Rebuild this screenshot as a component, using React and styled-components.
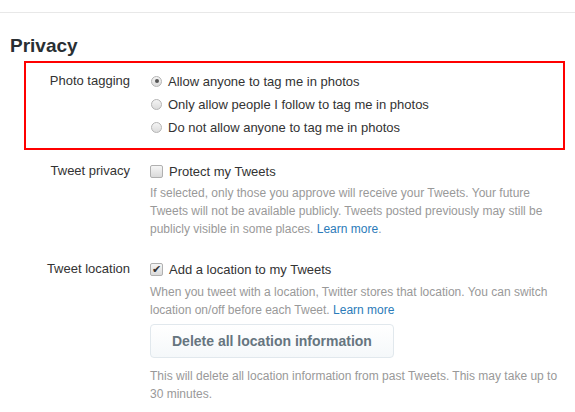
import React from "react";
import styled, { createGlobalStyle } from "styled-components";

const GlobalStyle = createGlobalStyle`
  html, body {
    margin: 0;
    padding: 0;
    background: #fff;
  }
  body {
    font-family: "Liberation Sans", Arial, sans-serif;
    font-size: 13px;
    color: #333;
  }
`;

const Page = styled.div`
  width: 575px;
  padding-top: 12px;
`;

const Rule = styled.div`
  height: 1px;
  background: #e8e8e8;
`;

const Heading = styled.h2`
  margin: 21px 0 0 10px;
  font-size: 19px;
  line-height: 24px;
  font-weight: bold;
  color: #292f33;
`;

const Highlight = styled.div`
  margin: 3px 10px 0 24px;
  border: 2px solid #f00;
  padding: 8px 0 11px;
`;

const Row = styled.div`
  display: grid;
  grid-template-columns: ${(p) => p.$labelWidth}px 1fr;
  column-gap: 20px;
  margin-top: ${(p) => p.$top || 0}px;
`;

const Label = styled.div`
  text-align: right;
  line-height: 18px;
  color: #333;
  padding-top: ${(p) => (p.$radio ? 1 : 0)}px;
`;

const Controls = styled.div`
  display: flex;
  flex-direction: column;
  gap: ${(p) => p.$gap || 0}px;
`;

const Choice = styled.label`
  display: flex;
  align-items: center;
  height: ${(p) => p.$h || 18}px;
  color: #333;
  font-size: 13px;
`;

const Radio = styled.span`
  width: 11px;
  height: 11px;
  border-radius: 50%;
  border: 1px solid #b4b4b4;
  background: linear-gradient(#f4f4f4, #dcdcdc);
  margin: 0 6px 0 1px;
  display: flex;
  align-items: center;
  justify-content: center;
  box-sizing: border-box;
  flex: none;
  &::after {
    content: "";
    width: 4px;
    height: 4px;
    border-radius: 50%;
    background: ${(p) => (p.$on ? "#555" : "transparent")};
  }
`;

const Box = styled.span`
  width: 13px;
  height: 13px;
  border-radius: 2px;
  border: 1px solid #b0b0b0;
  background: linear-gradient(#f6f6f6, #dadada);
  margin-right: 6px;
  box-sizing: border-box;
  flex: none;
  display: flex;
  align-items: center;
  justify-content: center;
  font-size: 11px;
  line-height: 1;
  color: #333;
`;

const Help = styled.p`
  margin: ${(p) => p.$top || 0}px 0 0;
  font-size: 12px;
  line-height: 18px;
  color: #999;
  padding-right: 4px;
`;

const Link = styled.a`
  color: #2b7bb9;
  text-decoration: none;
`;

const Button = styled.button`
  align-self: flex-start;
  margin-top: 5px;
  height: 34px;
  padding: 0 21px;
  border: 1px solid #e1e8ed;
  border-radius: 4px;
  background: linear-gradient(#fff, #f5f8fa);
  font-family: "Liberation Sans", Arial, sans-serif;
  font-size: 14px;
  font-weight: bold;
  color: #66757f;
  cursor: pointer;
`;

const tagOptions = [
  { text: "Allow anyone to tag me in photos", on: true },
  { text: "Only allow people I follow to tag me in photos", on: false },
  { text: "Do not allow anyone to tag me in photos", on: false },
];

export default function App() {
  return (
    <>
      <GlobalStyle />
      <Page>
        <Rule />
        <Heading>Privacy</Heading>

        <Highlight>
          <Row $labelWidth={104}>
            <Label $radio>Photo tagging</Label>
            <Controls $gap={3}>
              {tagOptions.map((o) => (
                <Choice key={o.text} $h={20}>
                  <Radio $on={o.on} />
                  {o.text}
                </Choice>
              ))}
            </Controls>
          </Row>
        </Highlight>

        <Row $labelWidth={130} $top={12}>
          <Label>Tweet privacy</Label>
          <Controls>
            <Choice>
              <Box />
              Protect my Tweets
            </Choice>
            <Help $top={4}>
              If selected, only those you approve will receive your Tweets. Your future
              Tweets will not be available publicly. Tweets posted previously may still be
              publicly visible in some places. <Link href="#">Learn more</Link>.
            </Help>
          </Controls>
        </Row>

        <Row $labelWidth={130} $top={22}>
          <Label>Tweet location</Label>
          <Controls>
            <Choice>
              <Box>✔</Box>
              Add a location to my Tweets
            </Choice>
            <Help $top={5}>
              When you tweet with a location, Twitter stores that location. You can switch
              location on/off before each Tweet. <Link href="#">Learn more</Link>
            </Help>
            <Button>Delete all location information</Button>
            <Help $top={9}>
              This will delete all location information from past Tweets. This may take up to
              30 minutes.
            </Help>
          </Controls>
        </Row>
      </Page>
    </>
  );
}
